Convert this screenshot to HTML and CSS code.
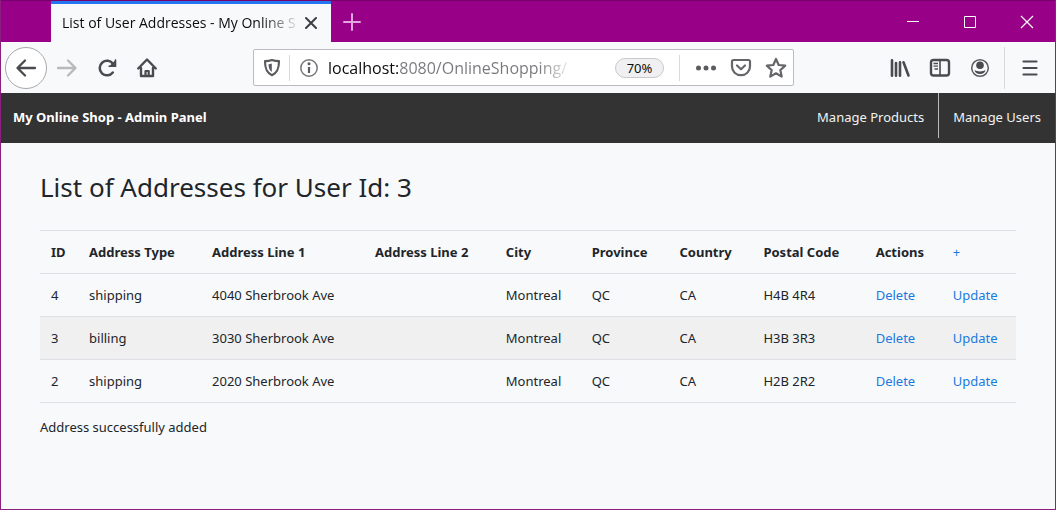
FILE: index.html
```html
<!DOCTYPE html>
<html lang="en">
<head>
<meta charset="utf-8">
<title>List of User Addresses - My Online Shop</title>
<link rel="stylesheet" href="styles.css">
</head>
<body>
<div class="window">
  <header class="titlebar">
    <div class="tab">
      <span class="tab-title">List of User Addresses - My Online S</span>
      <button class="tab-close" type="button" aria-label="Close tab"><svg width="12" height="12" viewBox="0 0 12 12" fill="none" stroke="#3f3f44" stroke-width="2" stroke-linecap="round"><path d="M1 1l10 10M11 1L1 11"/></svg></button>
    </div>
    <button class="new-tab" type="button" aria-label="New tab"><svg width="18" height="18" viewBox="0 0 18 18" fill="none" stroke="#e3a6df" stroke-width="2" stroke-linecap="round"><path d="M9 1v16M1 9h16"/></svg></button>
    <div class="window-controls">
      <button type="button" aria-label="Minimize"><svg width="14" height="14" viewBox="0 0 14 14" fill="none" stroke="#fff"><path d="M1 6.500h12"/></svg></button>
      <button type="button" aria-label="Maximize"><svg width="14" height="14" viewBox="0 0 14 14" fill="none" stroke="#fff"><path d="M1.500 1.500h11v11h-11z"/></svg></button>
      <button type="button" aria-label="Close"><svg width="14" height="14" viewBox="0 0 14 14" fill="none" stroke="#fff" stroke-width="1.200"><path d="M1 1l12 12M13 1L1 13"/></svg></button>
    </div>
  </header>

  <div class="toolbar">
    <div class="nav-buttons">
      <button class="back" type="button" aria-label="Back"><svg width="24" height="24" viewBox="0 0 24 24" fill="none" stroke="#4a4a4f" stroke-width="2.300" stroke-linecap="round" stroke-linejoin="round"><path d="M21 12H3.500M11 4.500L3.500 12l7.500 7.500"/></svg></button>
      <button type="button" aria-label="Forward" disabled><svg width="24" height="24" viewBox="0 0 24 24" fill="none" stroke="#b9b9bc" stroke-width="2.300" stroke-linecap="round" stroke-linejoin="round"><path d="M3 12h17.500M13 4.500l7.500 7.500-7.500 7.500"/></svg></button>
      <button type="button" aria-label="Reload"><svg width="24" height="24" viewBox="0 0 24 24" fill="none" stroke="#4a4a4f" stroke-width="2.500" stroke-linecap="round"><path d="M17.800 16.500a7.300 7.300 0 1 1 .3-8.500"/><path d="M21 3.500v7.500h-7.500z" fill="#4a4a4f" stroke="none"/><path d="M20.500 4v6.300h-6.300" stroke-width="1.600"/></svg></button>
      <button type="button" aria-label="Home"><svg width="24" height="24" viewBox="0 0 24 24" fill="none" stroke="#4a4a4f" stroke-width="2.400" stroke-linecap="round" stroke-linejoin="round"><path d="M3.200 12.500L12 3.500l8.800 9M6 12v8h12v-8"/><path d="M10.500 20v-5h3.200v5" stroke-width="2.200"/></svg></button>
    </div>

    <div class="urlbar">
      <button class="shield" type="button" aria-label="Tracking protection"><svg width="20" height="20" viewBox="0 0 20 20" fill="none" stroke="#5c5c60" stroke-width="2.200" stroke-linejoin="round"><path d="M10 2C7.500 2.900 5.200 3.200 3 3.200c0 7.300 1.500 11.400 7 14 5.500-2.600 7-6.700 7-14-2.200 0-4.500-.3-7-1.200z"/><path d="M9.800 5.600C8.700 6 7.800 6.100 6.500 6.200c.1 3.700.8 6 3.300 7.700z" fill="#5c5c60" stroke="none"/></svg></button>
      <button class="info" type="button" aria-label="Site information"><svg width="20" height="20" viewBox="0 0 20 20" fill="none" stroke="#77777b" stroke-width="1.500"><circle cx="10" cy="10" r="8.200"/><circle cx="10" cy="5.800" r="1.500" fill="#5c5c60" stroke="none"/><path d="M10 9v6" stroke="#5c5c60" stroke-width="2.200"/></svg></button>
      <input class="address" type="text" aria-label="Address" value="localhost:8080/OnlineShopping/">
      <button class="zoom" type="button">70%</button>
      <div class="page-actions">
        <button type="button" aria-label="Page actions"><svg width="24" height="24" viewBox="0 0 24 24" fill="#5c5c60"><circle cx="4.500" cy="12" r="2.500"/><circle cx="12" cy="12" r="2.500"/><circle cx="19.500" cy="12" r="2.500"/></svg></button>
        <button type="button" aria-label="Save to Pocket"><svg width="24" height="24" viewBox="0 0 24 24" fill="none" stroke="#66666a" stroke-width="2.200" stroke-linecap="round" stroke-linejoin="round"><path d="M4.500 4h15c.8 0 1.500.6 1.500 1.500V10.500c0 5-4 8.700-9 8.700s-9-3.700-9-8.700V5.500C3 4.600 3.700 4 4.500 4z"/><path d="M8 9.500l4 3.800 4-3.800"/></svg></button>
        <button type="button" aria-label="Bookmark"><svg width="24" height="24" viewBox="0 0 24 24" fill="none" stroke="#66666a" stroke-width="2.200" stroke-linejoin="round"><path d="M12 3l2.700 6 6.500.7-4.900 4.400 1.400 6.500L12 17.300l-5.700 3.300 1.400-6.500L2.800 9.700 9.300 9z"/></svg></button>
      </div>
    </div>

    <div class="tool-buttons">
      <button type="button" aria-label="Library"><svg width="24" height="24" viewBox="0 0 24 24" fill="none" stroke="#4a4a4f" stroke-width="2.600" stroke-linecap="round"><path d="M4 4.300v15.400M8 7v12.700M12 6.300v13.400M15.500 6.300l5 13.200"/></svg></button>
      <button type="button" aria-label="Sidebars"><svg width="24" height="24" viewBox="0 0 24 24" fill="none" stroke="#4a4a4f" stroke-width="2.400"><rect x="3" y="4" width="18" height="15.500" rx="2.500"/><path d="M12 4v15.500" stroke-width="1.600"/><path d="M5.500 7.500h4.500M5.500 10.200h4.500M6.500 13h3.500" stroke-width="1.300"/></svg></button>
      <button type="button" aria-label="Account"><svg width="24" height="24" viewBox="0 0 24 24" fill="#4a4a4f"><circle cx="12" cy="12" r="8.300" fill="none" stroke="#5c5c60" stroke-width="1.500"/><circle cx="12" cy="9.200" r="3.800"/><path d="M6.500 14c1 .9 3 1.400 5.500 1.400s4.500-.5 5.500-1.400c-.4 2.500-2.700 4-5.500 4s-5.100-1.500-5.500-4z"/></svg></button>
      <button class="menu" type="button" aria-label="Menu"><svg width="24" height="24" viewBox="0 0 24 24" fill="none" stroke="#4a4a4f" stroke-width="2.200" stroke-linecap="round"><path d="M5.500 5.500h13M5.500 12h13M5.500 18.500h13"/></svg></button>
    </div>
  </div>

  <nav class="navbar">
    <a class="brand" href="#">My Online Shop - Admin Panel</a>
    <a class="nav-link" href="#">Manage Products</a>
    <a class="nav-link" href="#">Manage Users</a>
  </nav>

  <main class="page">
    <h1>List of Addresses for User Id: 3</h1>
    <table class="addresses">
      <colgroup>
        <col class="col-id"><col class="col-type"><col class="col-line1"><col class="col-line2"><col class="col-city">
        <col class="col-province"><col class="col-country"><col class="col-postal"><col class="col-actions"><col class="col-update">
      </colgroup>
      <thead>
        <tr><th>ID</th><th>Address Type</th><th>Address Line 1</th><th>Address Line 2</th><th>City</th><th>Province</th><th>Country</th><th>Postal Code</th><th>Actions</th><th><a class="add" href="#">+</a></th></tr>
      </thead>
      <tbody>
        <tr><td>4</td><td>shipping</td><td>4040 Sherbrook Ave</td><td></td><td>Montreal</td><td>QC</td><td>CA</td><td>H4B 4R4</td><td><a href="#">Delete</a></td><td><a href="#">Update</a></td></tr>
        <tr><td>3</td><td>billing</td><td>3030 Sherbrook Ave</td><td></td><td>Montreal</td><td>QC</td><td>CA</td><td>H3B 3R3</td><td><a href="#">Delete</a></td><td><a href="#">Update</a></td></tr>
        <tr><td>2</td><td>shipping</td><td>2020 Sherbrook Ave</td><td></td><td>Montreal</td><td>QC</td><td>CA</td><td>H2B 2R2</td><td><a href="#">Delete</a></td><td><a href="#">Update</a></td></tr>
      </tbody>
    </table>
    <p class="status">Address successfully added</p>
  </main>
</div>
</body>
</html>
```
FILE: styles.css
```css
* {
  box-sizing: border-box;
}

body {
  margin: 0;
  font-family: "Noto Sans", "Open Sans", sans-serif;
  font-size: 13px;
  line-height: 20px;
  color: #212529;
}

button {
  display: flex;
  align-items: center;
  justify-content: center;
  flex: none;
  padding: 0;
  border: 0;
  background: none;
  font: inherit;
}

svg {
  display: block;
}

a {
  color: #1a7ae0;
  text-decoration: none;
}

.window {
  display: flex;
  flex-direction: column;
  min-height: 100vh;
  border: 1px solid #8a1f80;
  border-top-width: 0;
  background: #f8f9fb;
}

/* Title bar */
.titlebar {
  display: flex;
  height: 42px;
  padding-left: 50px;
  border-top: 1px solid #76006c;
  background: #990088;
}

.tab {
  display: flex;
  align-items: center;
  gap: 4px;
  flex: 0 1 280px;
  min-width: 0;
  padding: 0 14px 0 11px;
  border-top: 3px solid #2675f0;
  background: #f8f9fb;
}

.tab-title {
  flex: 1;
  min-width: 0;
  overflow: hidden;
  white-space: nowrap;
  font-family: "Open Sans", "Noto Sans", sans-serif;
  font-size: 14px;
  color: #0c0c0d;
  mask-image: linear-gradient(to left, transparent, #000 40px);
}

.new-tab {
  width: 42px;
}

.window-controls {
  display: flex;
  margin-left: auto;
}

.window-controls button {
  width: 57px;
}

/* Toolbar */
.toolbar {
  display: flex;
  align-items: center;
  justify-content: space-between;
  height: 51px;
  padding: 0 0 0 4px;
}

.nav-buttons,
.tool-buttons,
.page-actions {
  display: flex;
  align-items: center;
  flex: none;
}

.nav-buttons button,
.tool-buttons button {
  width: 40px;
  height: 42px;
}

.nav-buttons .back {
  width: 42px;
  border: 1px solid #a9a9ad;
  border-radius: 50%;
  background: #fff;
}

.tool-buttons .menu {
  width: 51px;
  margin-left: 4px;
  border-left: 1px solid #d9d9dc;
}

.urlbar {
  display: flex;
  align-items: center;
  flex: 0 1 541px;
  min-width: 0;
  height: 37px;
  border: 1px solid #bcbcc0;
  border-radius: 2px;
  background: #fff;
}

.shield {
  width: 36px;
  height: 26px;
  border-right: 1px solid #d9d9dc;
}

.info {
  width: 38px;
}

.address {
  flex: 1;
  min-width: 0;
  height: 30px;
  padding: 0;
  border: 0;
  outline: 0;
  font: 16px/24px "Open Sans", "Noto Sans", sans-serif;
  color: transparent;
  background: linear-gradient(to right, #0c0c0d 70px, #78787c 70px, #78787c 210px, transparent 246px);
  background-clip: text;
}

.zoom {
  width: 49px;
  height: 20px;
  margin-right: 15px;
  border: 1px solid #c9c9cc;
  border-radius: 10px;
  background: #f0f0f2;
  color: #0c0c0d;
}

.page-actions {
  height: 26px;
  padding-left: 8px;
  border-left: 1px solid #d9d9dc;
}

.page-actions button {
  width: 35px;
}

/* Site navigation */
.navbar {
  display: flex;
  align-items: flex-start;
  height: 50px;
  background: #333;
}

.navbar a {
  padding: 14px 14px 11px;
  color: #f2f2f2;
}

.navbar .brand {
  margin-right: auto;
  padding-left: 12px;
  font-weight: 700;
  color: #fff;
}

.nav-link + .nav-link {
  border-left: 1px solid #bbb;
}

/* Page content */
.page {
  padding: 27px 39px;
}

h1 {
  margin: 0 0 26px;
  font-size: 26px;
  line-height: 34px;
  font-weight: 400;
}

.addresses {
  width: 100%;
  table-layout: fixed;
  border-collapse: collapse;
  border-bottom: 1px solid #dee2e6;
}

.addresses th,
.addresses td {
  padding: 11px 0 11px 11px;
  border-top: 1px solid #dcdfe3;
  text-align: left;
  white-space: nowrap;
}

.addresses tbody tr:nth-child(even) {
  background: #f0f0f1;
}

.add {
  font-weight: 400;
}

.col-id { width: 3.9%; }
.col-type { width: 12.6%; }
.col-line1 { width: 16.7%; }
.col-line2 { width: 13.4%; }
.col-city { width: 8.8%; }
.col-province { width: 9%; }
.col-country { width: 8.6%; }
.col-postal { width: 11.5%; }
.col-actions { width: 7.9%; }
.col-update { width: 7.6%; }

.status {
  margin: 14px 0 0;
}
```
